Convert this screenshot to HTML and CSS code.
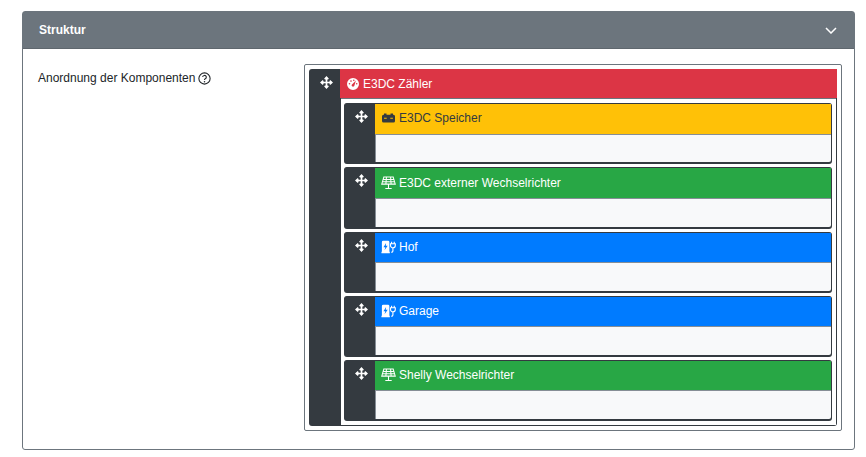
FILE: index.html
```html
<!DOCTYPE html>
<html lang="de">
<head>
<meta charset="utf-8">
<title>Struktur</title>
<link rel="stylesheet" href="styles.css">
</head>
<body>
<svg class="defs" width="0" height="0" aria-hidden="true">
  <defs>
    <symbol id="move" viewBox="0 0 14 14">
      <path d="M7 1.5V12.5M1.5 7H12.5" fill="none" stroke="currentColor" stroke-width="1.8"/>
      <path d="M7 0 9.6 3 8.6 3.8H5.4L4.4 3ZM7 14 4.4 11 5.4 10.2H8.6L9.6 11ZM0 7 3 4.4 3.8 5.4V8.6L3 9.6ZM14 7 11 9.6 10.2 8.6V5.4L11 4.4Z" fill="currentColor"/>
    </symbol>
    <symbol id="solar" viewBox="0 0 16 14">
      <path d="M3 .7H13L15.2 8.2H.8ZM2.3 3.2H13.7M1.6 5.7H14.4M5.8.7 5.2 8.2M10.2.7 10.8 8.2M8 8.2V12.6M4.6 12.8H11.4" fill="none" stroke="currentColor" stroke-width="1.1"/>
    </symbol>
    <symbol id="charge" viewBox="0 0 17 14">
      <path fill-rule="evenodd" d="M1 1.5A1.5 1.5 0 0 1 2.5 0H8A1.5 1.5 0 0 1 9.5 1.5V12.5H10V14H.5V12.5H1ZM5.8 2.5 2.8 7.4H4.9L4 10.8 7.6 5.7H5.4Z" fill="currentColor"/>
      <path d="M12 1V3.2M15 1V3.2M10.8 3.3H16.2V5.2A2.7 2.7 0 0 1 13.5 7.9A2.7 2.7 0 0 1 10.8 5.2ZM13.5 7.9V11.5Q13.5 13 11.5 13" fill="none" stroke="currentColor" stroke-width="1.3"/>
    </symbol>
  </defs>
</svg>
<section class="card">
  <header class="card-head">
    <h2 class="card-title">Struktur</h2>
    <svg class="chevron" viewBox="0 0 12 7" aria-hidden="true"><path d="M1 1 6 6 11 1" fill="none" stroke="currentColor" stroke-width="1.5"/></svg>
  </header>
  <div class="card-body">
    <div class="label">
      <span>Anordnung der Komponenten</span>
      <svg class="help" viewBox="0 0 12 12" aria-hidden="true">
        <circle cx="6" cy="6" r="5.2" fill="none" stroke="currentColor" stroke-width="1"/>
        <path d="M4.3 4.7A1.7 1.6 0 1 1 6.7 6.2Q6 6.6 6 7.4" fill="none" stroke="currentColor" stroke-width="1"/>
        <circle cx="6" cy="9" r=".7" fill="currentColor"/>
      </svg>
    </div>
    <div class="tree">
      <div class="node root">
        <div class="handle"><svg class="move"><use href="#move"/></svg></div>
        <div class="main">
          <div class="title red">
            <svg class="icon" viewBox="0 0 14 14" aria-hidden="true">
              <path fill-rule="evenodd" d="M7 1a6 6 0 1 1 0 12A6 6 0 0 1 7 1ZM9.9 3.5 6.5 7a1.4 1.4 0 1 0 1.9 1.6ZM3.5 6a.8.8 0 1 0 0 1.6.8.8 0 0 0 0-1.6ZM5 3.3a.8.8 0 1 0 0 1.6.8.8 0 0 0 0-1.6ZM7.8 2.5a.8.8 0 1 0 0 1.6.8.8 0 0 0 0-1.6ZM10.7 6a.8.8 0 1 0 0 1.6.8.8 0 0 0 0-1.6Z" fill="currentColor"/>
            </svg>
            <span>E3DC Zähler</span>
          </div>
          <div class="children">
            <div class="node">
              <div class="handle"><svg class="move"><use href="#move"/></svg></div>
              <div class="main">
                <div class="title yellow">
                  <svg class="icon" viewBox="0 0 14 14" aria-hidden="true">
                    <path fill-rule="evenodd" d="M2.5 2.5H5V3.7H9V2.5H11.5V3.7H12A1.5 1.5 0 0 1 13.5 5.2V10A1.5 1.5 0 0 1 12 11.5H2A1.5 1.5 0 0 1 .5 10V5.2A1.5 1.5 0 0 1 2 3.7H2.5ZM2.6 6.7V7.7H5.2V6.7ZM8.8 6.7V7.7H11.4V6.7Z" fill="currentColor"/>
                  </svg>
                  <span>E3DC Speicher</span>
                </div>
                <div class="slot"></div>
              </div>
            </div>
            <div class="node">
              <div class="handle"><svg class="move"><use href="#move"/></svg></div>
              <div class="main">
                <div class="title green"><svg class="icon"><use href="#solar"/></svg><span>E3DC externer Wechselrichter</span></div>
                <div class="slot"></div>
              </div>
            </div>
            <div class="node">
              <div class="handle"><svg class="move"><use href="#move"/></svg></div>
              <div class="main">
                <div class="title blue"><svg class="icon"><use href="#charge"/></svg><span>Hof</span></div>
                <div class="slot"></div>
              </div>
            </div>
            <div class="node">
              <div class="handle"><svg class="move"><use href="#move"/></svg></div>
              <div class="main">
                <div class="title blue"><svg class="icon"><use href="#charge"/></svg><span>Garage</span></div>
                <div class="slot"></div>
              </div>
            </div>
            <div class="node">
              <div class="handle"><svg class="move"><use href="#move"/></svg></div>
              <div class="main">
                <div class="title green"><svg class="icon"><use href="#solar"/></svg><span>Shelly Wechselrichter</span></div>
                <div class="slot"></div>
              </div>
            </div>
          </div>
        </div>
      </div>
    </div>
  </div>
</section>
</body>
</html>
```
FILE: styles.css
```css
* { box-sizing: border-box; }
html, body { margin: 0; background: #fff; }
body {
  padding: 11px 11px 0 22px;
  font-family: "Liberation Sans", Arial, sans-serif;
  font-size: 12px;
  color: #212529;
}
.defs { position: absolute; }
.card {
  height: 439px;
  border: 1px solid #6c757d;
  border-radius: 3px;
  display: flex;
  flex-direction: column;
}
.card-head {
  height: 37px;
  flex: none;
  padding: 0 17px 0 16px;
  display: flex;
  align-items: center;
  justify-content: space-between;
  background: #6c757d;
  border-bottom: 1px solid #5f676e;
  color: #fff;
}
.card-title { margin: 0; font-size: 12px; font-weight: 700; }
.chevron { width: 12px; height: 7px; margin-top: 1px; color: #fff; }
.card-body {
  flex: 1;
  display: flex;
  justify-content: space-between;
  padding: 15px 12px 0 15px;
}
.label { display: flex; align-items: flex-start; gap: 3px; padding-top: 7px; line-height: 14px; }
.help { width: 13px; height: 13px; margin-top: 1px; }
.tree {
  width: 538px;
  height: 367px;
  padding: 4px;
  border: 1px solid #6c757d;
  border-radius: 2px;
  background: #fff;
}
.node {
  display: flex;
  height: 61.2px;
  background: #343a40;
  border: 1px solid #343a40;
  border-bottom-width: 2px;
  border-radius: 3px;
}
.root { height: 357px; border-width: 0; }
.handle {
  flex: none;
  width: 30px;
  display: flex;
  justify-content: center;
  padding: 6px 0 0 3px;
  color: #fff;
}
.root > .handle { width: 31px; padding-top: 7px; padding-left: 3px; }
.move { width: 13px; height: 13px; }
.main { flex: 1; min-width: 0; display: flex; flex-direction: column; }
.title {
  height: 29.5px;
  flex: none;
  display: flex;
  align-items: center;
  gap: 3px;
  padding-left: 6px;
  padding-bottom: 1px;
  line-height: 14px;
}
.root > .main > .title { height: 29px; padding-bottom: 0; }
.icon { width: 14px; height: 14px; flex: none; }
.children .icon { width: 15px; }
.red { background: #dc3545; color: #fff; }
.yellow { background: #ffc107; color: #343a40; }
.green { background: #28a745; color: #fff; }
.blue { background: #007bff; color: #fff; }
.slot {
  flex: 1;
  background: #f8f9fa;
  border-left: 1px solid #868e96;
  border-top: 1px solid #868e96;
  border-radius: 0 0 2px 0;
}
.children {
  flex: 1;
  display: flex;
  flex-direction: column;
  gap: 3px;
  padding: 4.2px 4px 4px 3px;
  margin: 0 1px 1px;
  background: #fff;
  border-top: 1px solid #6c757d;
}
```
